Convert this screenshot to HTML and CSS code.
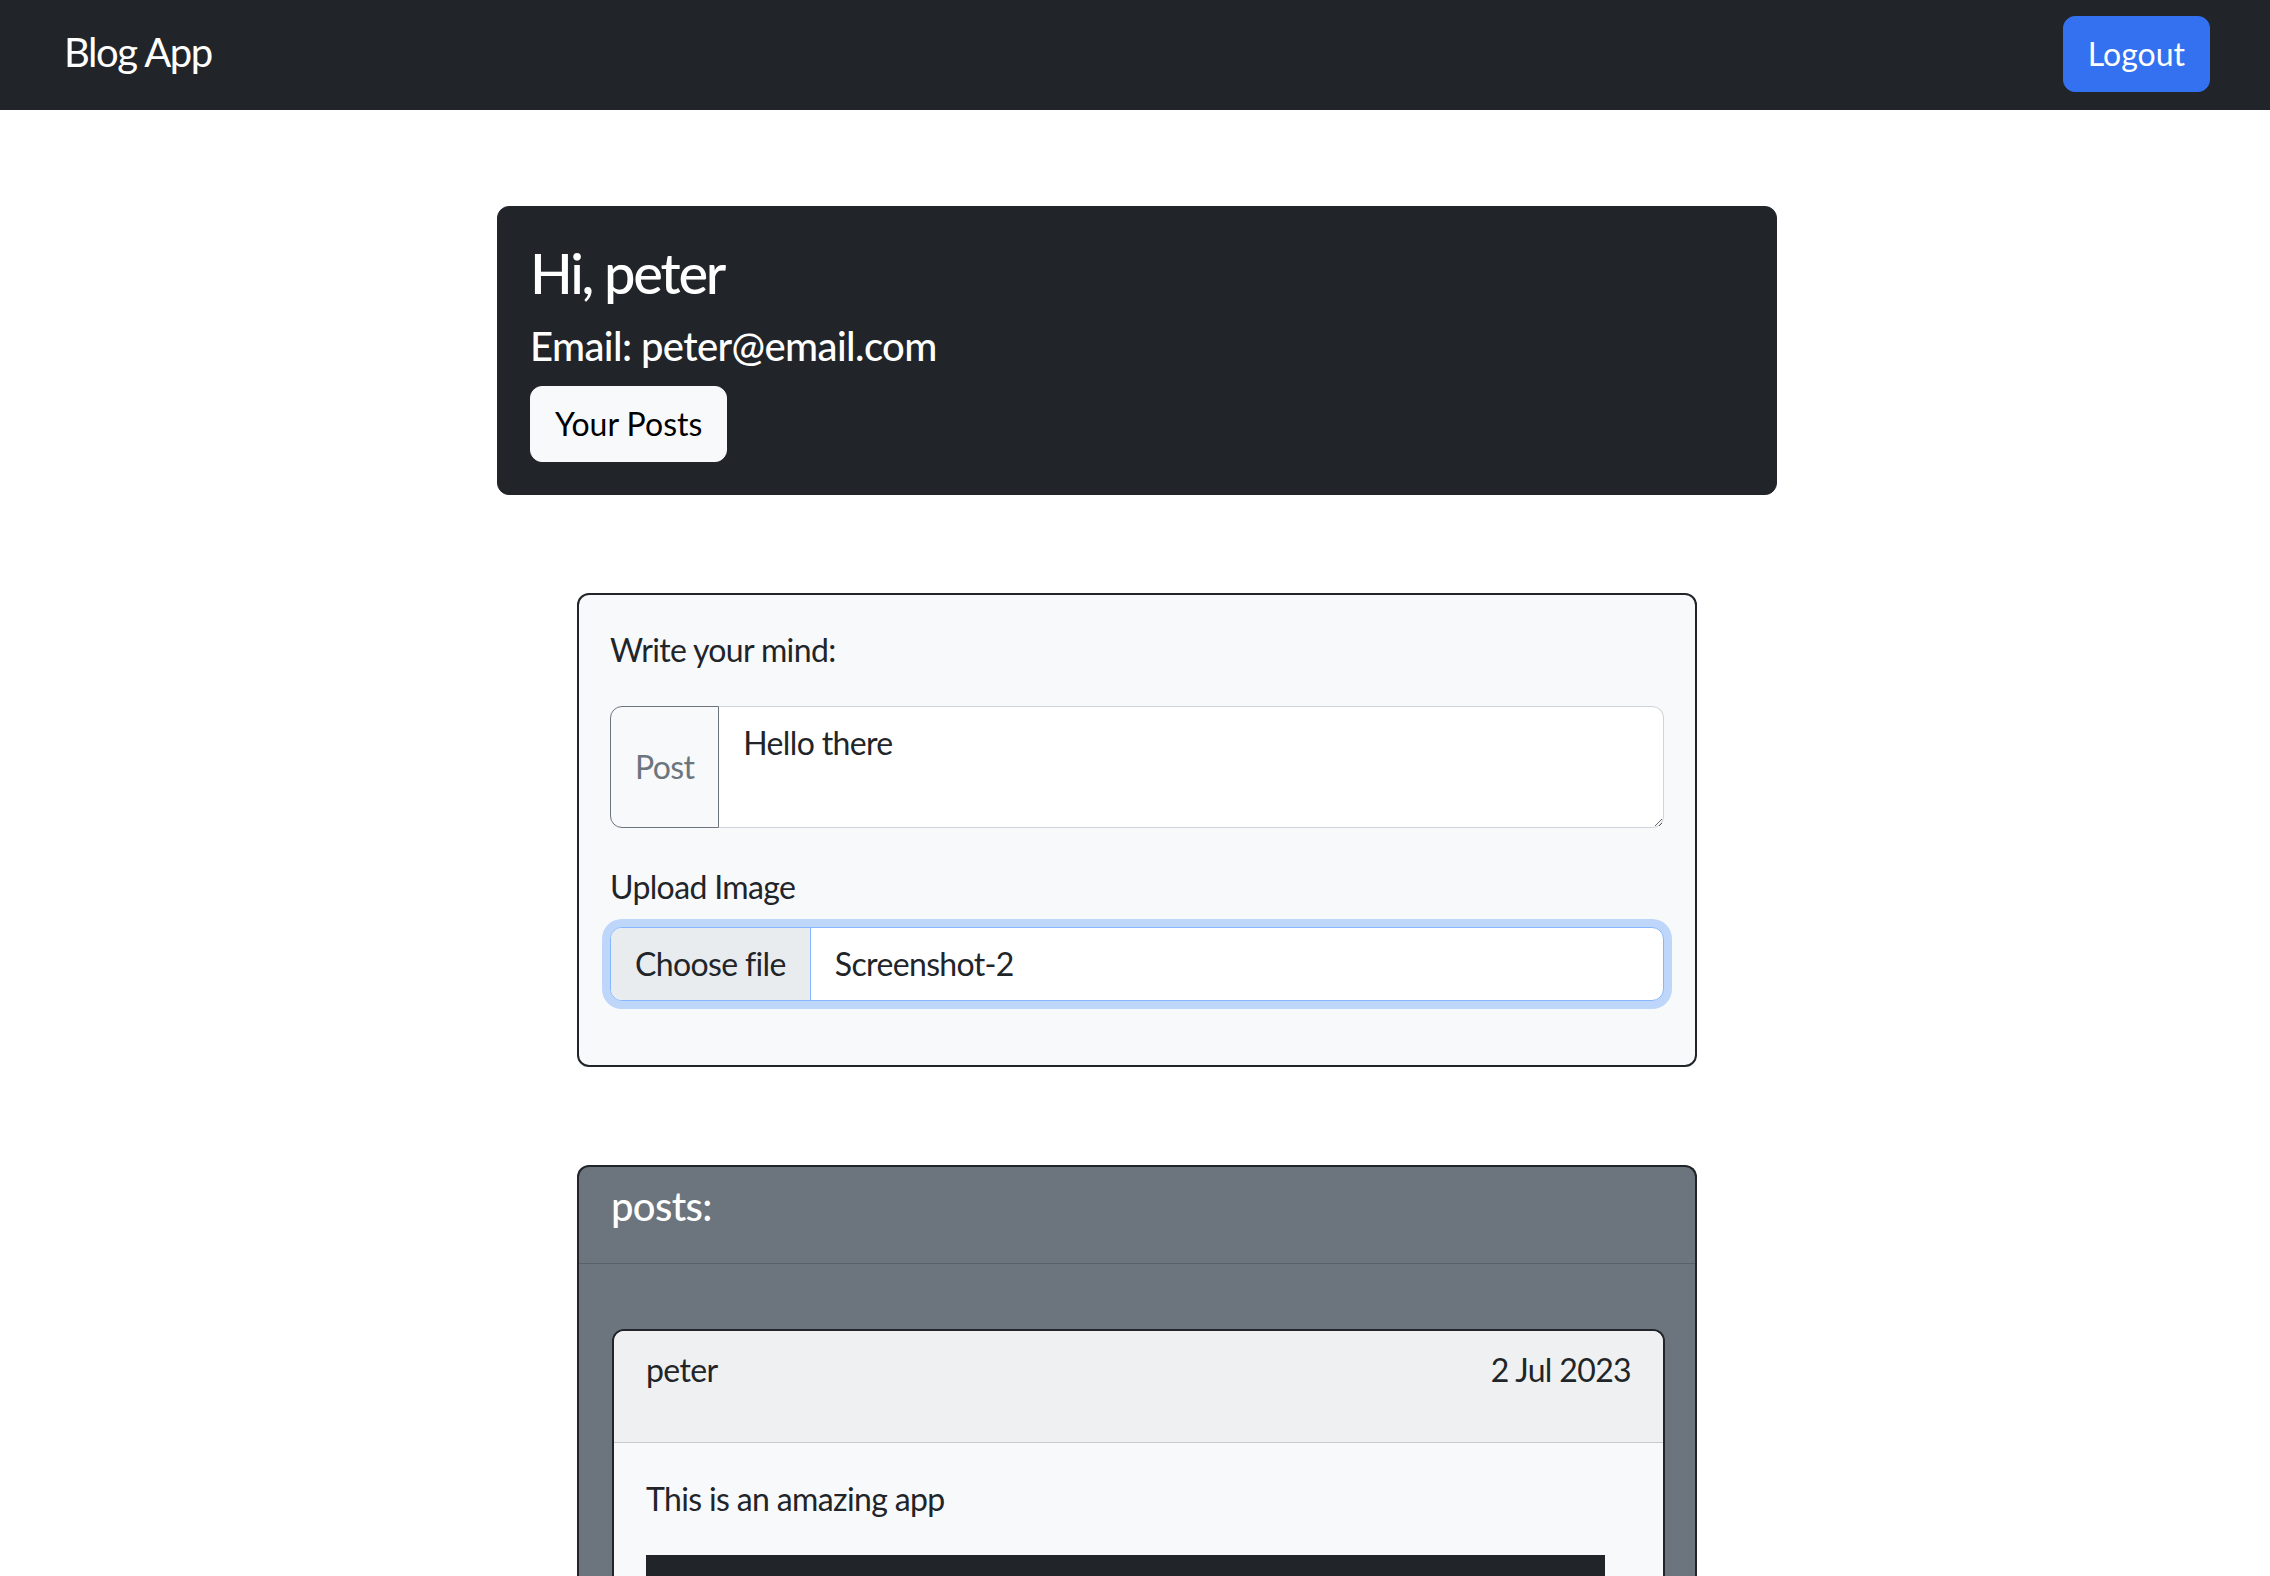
FILE: index.html
```html
<!DOCTYPE html>
<html lang="en">
<head>
<meta charset="utf-8">
<title>Blog App</title>
<link rel="stylesheet" href="styles.css">
</head>
<body>
<nav class="navbar">
  <span class="brand">Blog App</span>
  <button class="btn btn-primary" type="button">Logout</button>
</nav>
<main class="main">
  <section class="profile">
    <h3 class="profile-name">Hi, peter</h3>
    <h5 class="profile-email">Email: peter@email.com</h5>
    <button class="btn btn-light" type="button">Your Posts</button>
  </section>

  <section class="compose">
    <label class="form-label label-mind">Write your mind:</label>
    <div class="input-group">
      <span class="addon">Post</span>
      <textarea class="textarea" rows="2">Hello there</textarea>
    </div>
    <label class="form-label label-upload">Upload Image</label>
    <div class="file-input">
      <span class="file-btn">Choose file</span>
      <span class="file-name">Screenshot-2</span>
    </div>
  </section>

  <section class="posts">
    <div class="posts-header"><h5 class="posts-title">posts:</h5></div>
    <div class="posts-body">
      <article class="post">
        <div class="post-header"><span>peter</span><span>2 Jul 2023</span></div>
        <div class="post-body">
          <p class="post-text">This is an amazing app</p>
          <div class="post-image"></div>
        </div>
      </article>
    </div>
  </section>
</main>
</body>
</html>
```
FILE: styles.css
```css
html {
  scrollbar-width: none;
}
* {
  box-sizing: border-box;
}
body {
  margin: 0;
  background: #ffffff;
  color: #212529;
  font-family: "Lato", "Liberation Sans", sans-serif;
  font-size: 32px;
  line-height: 1.5;
  letter-spacing: -0.02em;
}
h3, h5, p {
  margin: 0;
}

/* navbar */
.navbar {
  height: 110px;
  background: #212529;
  display: flex;
  align-items: flex-start;
  justify-content: space-between;
  padding: 16px 60px 0 64px;
}
.brand {
  color: #ffffff;
  font-size: 40px;
  line-height: 60px;
  margin-top: 6px;
  letter-spacing: -0.035em;
}
.btn {
  font-family: inherit;
  font-size: 32px;
  letter-spacing: 0;
  line-height: 50px;
  padding: 12px 24px;
  border-radius: 12px;
  border: 1px solid transparent;
  cursor: pointer;
}
.btn-primary {
  background: #3371f0;
  border-color: #3371f0;
  color: #ffffff;
}
.btn-light {
  background: #f8f9fa;
  border-color: #f8f9fa;
  color: #000000;
}

/* main column */
.main {
  display: flex;
  flex-direction: column;
  align-items: center;
  padding-left: 4px;
}

.profile {
  margin-top: 96px;
  width: 1280px;
  background: #212529;
  border: 1px solid #212529;
  border-radius: 12px;
  padding: 32px;
  color: #ffffff;
  display: flex;
  flex-direction: column;
  align-items: flex-start;
}
.profile-name {
  font-size: 56px;
  font-weight: 500;
  line-height: 1.2;
  margin-bottom: 16px;
  letter-spacing: -0.04em;
}
.profile-email {
  font-size: 40px;
  font-weight: 500;
  line-height: 1.2;
  margin-bottom: 16px;
  letter-spacing: -0.015em;
}

/* compose form */
.compose {
  margin-top: 98px;
  width: 1120px;
  background: #f8f9fa;
  border: 2px solid #212529;
  border-radius: 12px;
  padding: 31px 31px;
  display: flex;
  flex-direction: column;
}
.form-label {
  display: block;
  line-height: 48px;
}
.label-mind {
  margin-bottom: 32px;
}
.label-upload {
  margin-bottom: 16px;
}
.input-group {
  display: flex;
  height: 122px;
  margin-bottom: 35px;
}
.addon {
  display: flex;
  align-items: center;
  padding: 12px 24px;
  border: 1px solid #6c757d;
  border-radius: 12px 0 0 12px;
  color: #6c757d;
  background: #f8f9fa;
}
.textarea {
  flex: 1;
  height: 122px;
  margin-left: -1px;
  padding: 12px 24px;
  font-family: inherit;
  font-size: 32px;
  letter-spacing: -0.02em;
  line-height: 48px;
  color: #212529;
  background: #ffffff;
  border: 1px solid #ced4da;
  border-left-color: #6c757d;
  border-radius: 0 12px 12px 0;
  resize: vertical;
  outline: none;
}
.file-input {
  display: flex;
  height: 74px;
  margin-bottom: 33px;
  background: #ffffff;
  border: 1px solid #86b7fe;
  border-radius: 12px;
  box-shadow: 0 0 0 8px rgba(13, 110, 253, 0.25);
  overflow: hidden;
}
.file-btn {
  display: flex;
  align-items: center;
  padding: 0 24px;
  background: #e9ecef;
  border-right: 1px solid #86b7fe;
  color: #212529;
}
.file-name {
  display: flex;
  align-items: center;
  padding: 0 24px;
}

/* posts */
.posts {
  margin-top: 98px;
  width: 1120px;
  background: #6c757d;
  border: 2px solid #212529;
  border-bottom: none;
  border-radius: 12px 12px 0 0;
}
.posts-header {
  padding: 15px 32px 17px;
  border-bottom: 1px solid #596067;
}
.posts-title {
  color: #ffffff;
  font-size: 40px;
  font-weight: 500;
  line-height: 48px;
  margin-bottom: 16px;
}
.posts-body {
  padding: 65px 30px 0 33px;
}
.post {
  background: #f8f9fa;
  border: 2px solid #212529;
  border-bottom: none;
  border-radius: 12px 12px 0 0;
  overflow: hidden;
}
.post-header {
  display: flex;
  justify-content: space-between;
  padding: 15px 32px 48px;
  background: #eff0f1;
  border-bottom: 1px solid #c9cacc;
  line-height: 48px;
}
.post-body {
  padding: 32px 32px 0;
}
.post-text {
  line-height: 48px;
  margin-bottom: 32px;
}
.post-image {
  width: 959px;
  height: 300px;
  background: #212529;
}
```
